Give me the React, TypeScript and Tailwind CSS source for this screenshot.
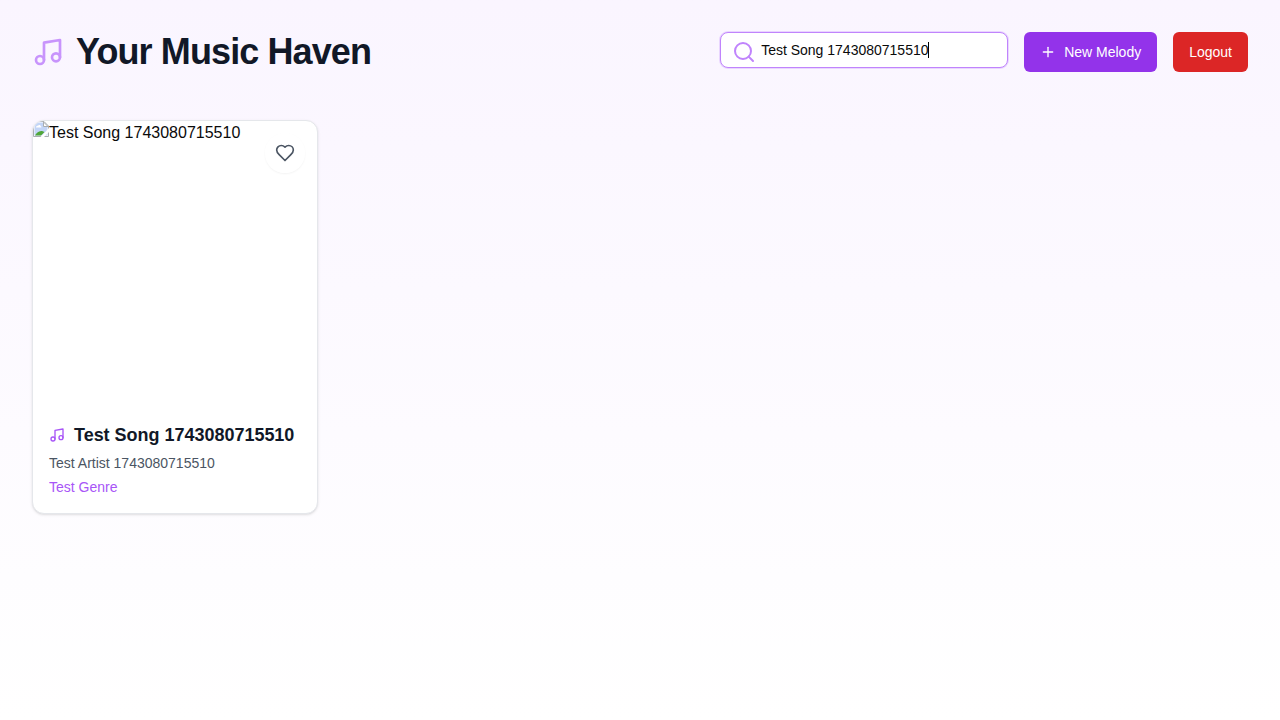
import { useState } from "react";
import { Music, Plus, Search } from "lucide-react";

type Song = { id: number; title: string; artist: string; genre: string };

const songs: Song[] = [
  { id: 1, title: "Test Song 1743080715510", artist: "Test Artist 1743080715510", genre: "Test Genre" },
];

function MissingImage() {
  return (
    <svg className="block h-4 w-4 shrink-0" viewBox="0 0 16 16" fill="none">
      <path d="M1.5 1.5H10.5V5.5H14.5V14.5H1.5Z" fill="#c3d5f7" />
      <path d="M3 6.5C3 5.2 4 4.6 5 4.8C5.5 3.6 7.5 3.8 7.7 5.2C8.7 5.2 8.8 6.5 8 6.5Z" fill="#fff" />
      <path d="M2 14.5C3 12 6 9.5 9 10L11.5 11L8 14.5Z" fill="#4fa638" />
      <path d="M0.5 15.5V0.5H11L15.5 5V15.5H0.5" stroke="#a9adb1" />
      <path d="M10.5 1V5.5H15Z" fill="#fff" stroke="#a9adb1" />
      <path d="M16 7L7.5 16H11L16 11Z" fill="#fff" />
    </svg>
  );
}

function HeartOutline() {
  return (
    <svg
      className="h-5 w-5"
      viewBox="0 0 24 24"
      fill="none"
      stroke="currentColor"
      strokeWidth="2"
      strokeLinecap="round"
      strokeLinejoin="round"
    >
      <path d="M19 14c1.49-1.46 3-3.21 3-5.5A5.5 5.5 0 0 0 16.5 3c-1.76 0-3 .5-4.5 2-1.5-1.5-2.74-2-4.5-2A5.5 5.5 0 0 0 2 8.5c0 2.3 1.5 4.05 3 5.5l7 7Z" />
    </svg>
  );
}

function SongCard({ song }: { song: Song }) {
  return (
    <article className="overflow-hidden rounded-xl border border-[#e5e7eb] bg-white shadow-sm">
      <div className="relative aspect-square">
        <div className="flex text-base text-[#0a0a0a]">
          <MissingImage />
          <span>{song.title}</span>
        </div>
        <button
          aria-label="Favorite"
          className="absolute top-3 right-3 flex h-10 w-10 items-center justify-center rounded-full bg-white/80 text-[#4b5563] shadow-[0_1px_2px_rgba(0,0,0,0.05)]"
        >
          <HeartOutline />
        </button>
      </div>
      <div className="p-4">
        <h2 className="flex items-center gap-[9px] text-lg font-bold text-[#111827]">
          <Music className="h-4 w-4 shrink-0 text-[#a855f7]" />
          <span className="whitespace-nowrap tracking-[-0.02px]">{song.title}</span>
        </h2>
        <p className="mt-1 text-sm text-[#4b5563]">{song.artist}</p>
        <p className="mt-1 text-sm text-[#a855f7]">{song.genre}</p>
      </div>
    </article>
  );
}

export default function App() {
  const [query, setQuery] = useState("Test Song 1743080715510");
  return (
    <main className="min-h-screen bg-linear-to-b from-[#faf5ff] to-white p-8 font-['Liberation_Sans',sans-serif]">
      <header className="mb-12 flex h-10 items-center justify-between">
        <h1 className="flex items-center gap-3 text-4xl font-bold tracking-tight text-[#111827]">
          <Music className="h-8 w-8 text-[#c084fc] opacity-85" />
          Your Music Haven
        </h1>
        <div className="flex items-start gap-4">
          <label className="relative flex h-9 w-72 rounded-lg border border-[#c084fc] bg-white shadow-[0_0_0_1px_#e9d5ff]">
            <Search className="absolute top-[7px] left-[11px] h-6 w-6 text-[#c084fc]" />
            <input
              className="w-full bg-transparent pl-10 text-sm text-[#0a0a0a] outline-none"
              value={query}
              onChange={(e) => setQuery(e.target.value)}
            />
            <span className="absolute top-[9px] left-[207px] h-4 w-px bg-black" />
          </label>
          <button className="flex h-10 items-center gap-2 rounded-md bg-[#9333ea] px-4 text-sm font-medium text-white">
            <Plus className="h-4 w-4" />
            New Melody
          </button>
          <button className="h-10 rounded-md bg-[#dc2626] px-4 text-sm font-medium text-white">Logout</button>
        </div>
      </header>
      <section className="grid grid-cols-4 items-start gap-6">
        {songs.map((song) => (
          <SongCard key={song.id} song={song} />
        ))}
      </section>
    </main>
  );
}
